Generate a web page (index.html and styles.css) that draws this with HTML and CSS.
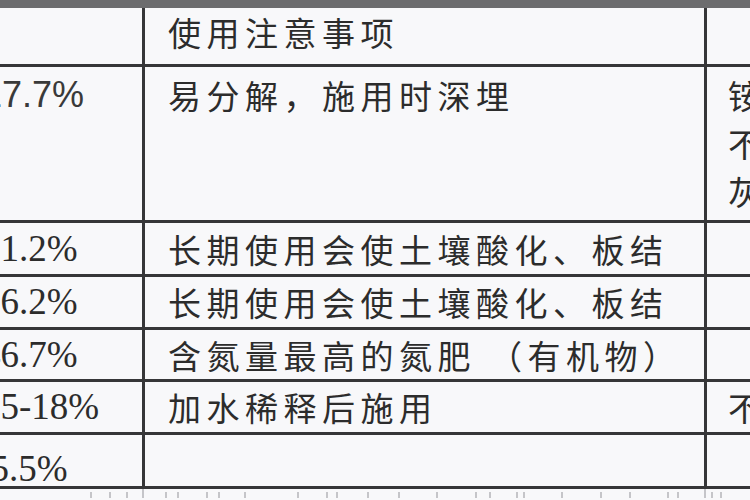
FILE: index.html
```html
<!DOCTYPE html>
<html lang="zh-CN">
<head>
<meta charset="utf-8">
<title>氮肥使用注意事项</title>
<link rel="stylesheet" href="styles.css">
</head>
<body>
<div class="topbar"></div>
<div class="frame">
  <div class="sheet">
    <div class="cell num head"></div>
    <div class="cell txt head">使用注意事项</div>
    <div class="cell side head"></div>

    <div class="cell num top sans">17.7%</div>
    <div class="cell txt top">易分解，施用时深埋</div>
    <div class="cell side top">铵态氮肥与碱性肥料<br>不能混用，如草木<br>灰、石灰等</div>

    <div class="cell num">21.2%</div>
    <div class="cell txt">长期使用会使土壤酸化、板结</div>
    <div class="cell side"></div>

    <div class="cell num">26.2%</div>
    <div class="cell txt">长期使用会使土壤酸化、板结</div>
    <div class="cell side"></div>

    <div class="cell num">46.7%</div>
    <div class="cell txt">含氮量最高的氮肥 （有机物）</div>
    <div class="cell side"></div>

    <div class="cell num">15-18%</div>
    <div class="cell txt">加水稀释后施用</div>
    <div class="cell side">不能与碱性物质混用</div>

    <div class="cell num low">35.5%</div>
    <div class="cell txt"></div>
    <div class="cell side"></div>
  </div>
  <svg class="ticks" width="750" height="11" viewBox="0 0 750 11">
    <g stroke="#b4b4b8" stroke-width="1.5">
      <line x1="91" y1="3" x2="91" y2="9"/>
      <line x1="110" y1="3" x2="110" y2="9"/>
      <line x1="127" y1="3" x2="127" y2="9"/>
      <line x1="143" y1="0" x2="143" y2="9"/>
      <line x1="166" y1="3" x2="166" y2="9"/>
      <line x1="178" y1="3" x2="178" y2="9"/>
      <line x1="207" y1="3" x2="207" y2="9"/>
      <line x1="219" y1="3" x2="219" y2="9"/>
      <line x1="245" y1="3" x2="245" y2="9"/>
      <line x1="298" y1="3" x2="298" y2="9"/>
      <line x1="327" y1="3" x2="327" y2="9"/>
      <line x1="337" y1="3" x2="337" y2="9"/>
      <line x1="368" y1="3" x2="368" y2="9"/>
      <line x1="399" y1="3" x2="399" y2="9"/>
      <line x1="437" y1="3" x2="437" y2="9"/>
      <line x1="476" y1="3" x2="476" y2="9"/>
      <line x1="490" y1="3" x2="490" y2="9"/>
      <line x1="517" y1="3" x2="517" y2="9"/>
      <line x1="524" y1="3" x2="524" y2="9"/>
      <line x1="562" y1="3" x2="562" y2="9"/>
      <line x1="601" y1="3" x2="601" y2="9"/>
      <line x1="630" y1="3" x2="630" y2="9"/>
      <line x1="668" y1="3" x2="668" y2="9"/>
      <line x1="678" y1="3" x2="678" y2="9"/>
      <line x1="705" y1="0" x2="705" y2="9"/>
      <line x1="712" y1="3" x2="712" y2="9"/>
      <line x1="721" y1="3" x2="721" y2="9"/>
    </g>
  </svg>
</div>
</body>
</html>
```

FILE: styles.css
```css
html, body {
  margin: 0;
  padding: 0;
  background: #f8f8fa;
}

body {
  width: 750px;
  height: 500px;
  overflow: hidden;
  color: #2c2c2c;
  font-family: "Noto Sans CJK SC", "Noto Sans", sans-serif;
}

.topbar {
  height: 8px;
  background: #6c6c6e;
}

.frame {
  width: 750px;
  overflow: hidden;
}

.sheet {
  display: grid;
  grid-template-columns: 185px 562px 300px;
  grid-template-rows: 59px 156px 54px 53px 52px 53px 54px;
  margin-left: -40px;
  width: 1047px;
}

.cell {
  box-sizing: border-box;
  border-bottom: 3px solid #363638;
  border-right: 3px solid #363638;
  display: flex;
  align-items: center;
  white-space: nowrap;
  overflow: hidden;
  line-height: 48px;
}

.num {
  padding-left: 22px;
  font-family: "Liberation Serif", "Times New Roman", serif;
  font-size: 37px;
}

.num.sans {
  font-family: "Liberation Sans", Arial, sans-serif;
  font-size: 36px;
  color: #3a3a3a;
}

.txt {
  padding-left: 23px;
  font-size: 33px;
  letter-spacing: 5.5px;
}

.side {
  border-right: none;
  padding-left: 21px;
  font-size: 33px;
  letter-spacing: 5.5px;
}

.head {
  align-items: flex-start;
  padding-top: 0;
}

.top {
  align-items: flex-start;
  padding-top: 4px;
}

.low {
  align-items: flex-end;
  line-height: 34px;
  padding-left: 12px;
  padding-bottom: 0;
}

.ticks {
  display: block;
}
```
